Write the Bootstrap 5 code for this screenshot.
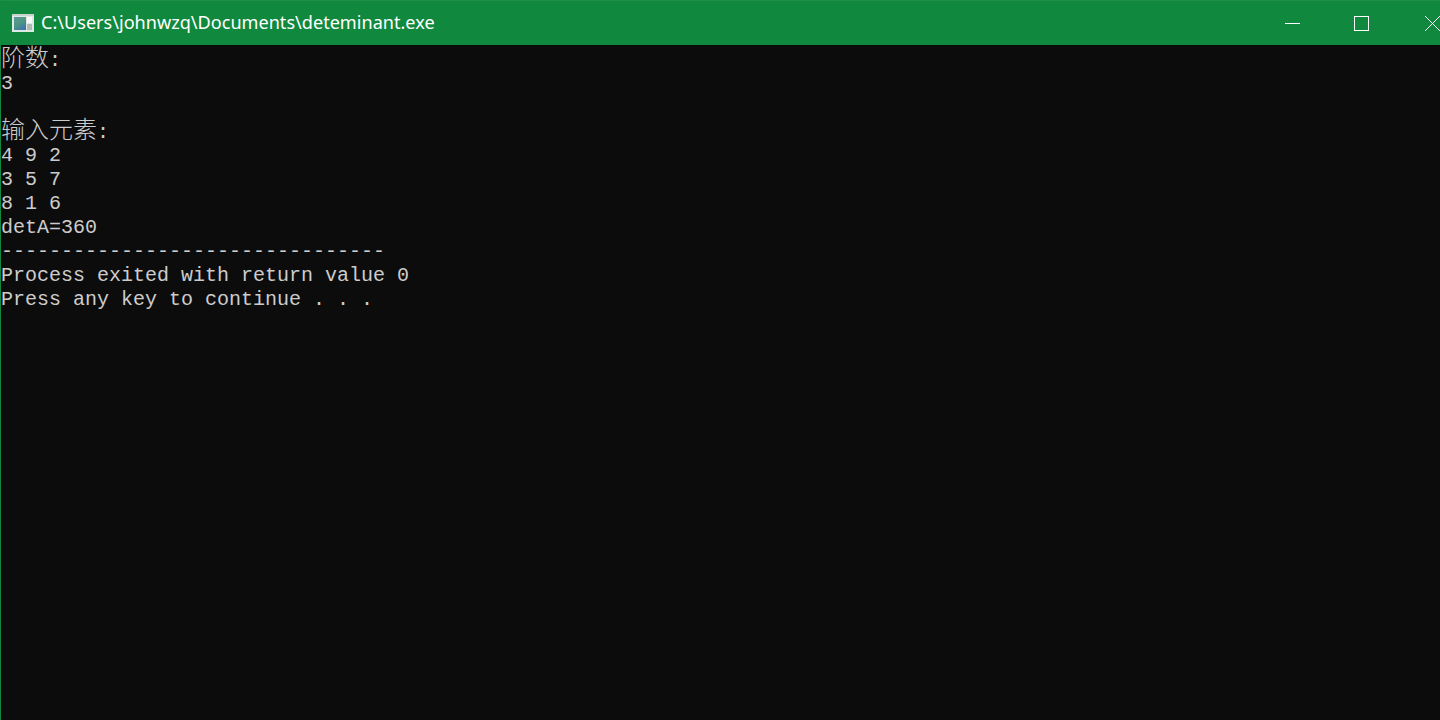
<!DOCTYPE html>
<html lang="zh">
<head>
<meta charset="utf-8">
<title>deteminant.exe</title>
<link href="https://cdn.jsdelivr.net/npm/bootstrap@5.3.0/dist/css/bootstrap.min.css" rel="stylesheet">
<style>
html,body{height:100%;margin:0;overflow:hidden;background:#0c0c0c}
.win-frame{height:720px;width:1440px;border-left:1px solid #10893e;overflow:hidden}
.win-title{height:45px;background:#10893e;border-top:1px solid #1f9049;margin-left:-1px;color:#fff;font-family:"Noto Sans",sans-serif;font-size:18.1px;flex:none}
.win-icon{width:22px;height:18px;margin-left:12px;margin-right:7px;flex:none}
.win-name{line-height:42px;height:44px;white-space:nowrap}
.win-ctl{width:69px;height:44px;flex:none}
.win-ctl-close{margin-left:2px;margin-right:-27px}
.console-out{margin:0;padding:3px 0 0 0;background:#0c0c0c;color:#cccccc;font-family:"Liberation Mono","Noto Sans CJK SC",monospace;font-size:20px;line-height:24px;height:675px}
.console-out div{height:24px;white-space:pre}
.console-out div.cjk-line{line-height:16px}
.cjk-text{font-family:"Noto Sans CJK SC",sans-serif;font-size:24px;font-weight:300;line-height:16px}
</style>
</head>
<body>
<div class="win-frame d-flex flex-column">
  <div class="win-title d-flex align-items-center">
    <svg class="win-icon" viewBox="0 0 22 18">
      <defs><linearGradient id="pane" x1="0" y1="0" x2="0.6" y2="1"><stop offset="0" stop-color="#5f93a6"/><stop offset="0.5" stop-color="#4f9a80"/><stop offset="1" stop-color="#3f78a8"/></linearGradient></defs>
      <rect x="0" y="0" width="22" height="18" fill="#dfe8e3"/>
      <rect x="0" y="0" width="22" height="2" fill="#c9d4ce"/>
      <rect x="2" y="3" width="12" height="13" fill="url(#pane)"/>
      <rect x="15" y="3" width="5" height="6" fill="#f7faf8"/>
      <rect x="15" y="10" width="5" height="6" fill="#aebcb5"/>
    </svg>
    <span class="win-name">C:\Users\johnwzq\Documents\deteminant.exe</span>
    <div class="ms-auto d-flex">
      <div class="win-ctl d-flex align-items-center justify-content-center">
        <svg width="15" height="15" viewBox="0 0 15 15"><path d="M0 7.5H15" stroke="#fff" fill="none"/></svg>
      </div>
      <div class="win-ctl d-flex align-items-center justify-content-center">
        <svg width="15" height="15" viewBox="0 0 15 15"><rect x="0.5" y="0.5" width="14" height="14" stroke="#fff" fill="none"/></svg>
      </div>
      <div class="win-ctl win-ctl-close d-flex align-items-center justify-content-center">
        <svg width="15" height="15" viewBox="0 0 15 15"><path d="M0 0L15 15M15 0L0 15" stroke="#fff" fill="none"/></svg>
      </div>
    </div>
  </div>
  <div class="console-out">
    <div class="cjk-line"><span class="cjk-text">阶数</span>:</div>
    <div>3</div>
    <div> </div>
    <div class="cjk-line"><span class="cjk-text">输入元素</span>:</div>
    <div>4 9 2</div>
    <div>3 5 7</div>
    <div>8 1 6</div>
    <div>detA=360</div>
    <div>--------------------------------</div>
    <div>Process exited with return value 0</div>
    <div>Press any key to continue . . .</div>
  </div>
</div>
</body>
</html>
